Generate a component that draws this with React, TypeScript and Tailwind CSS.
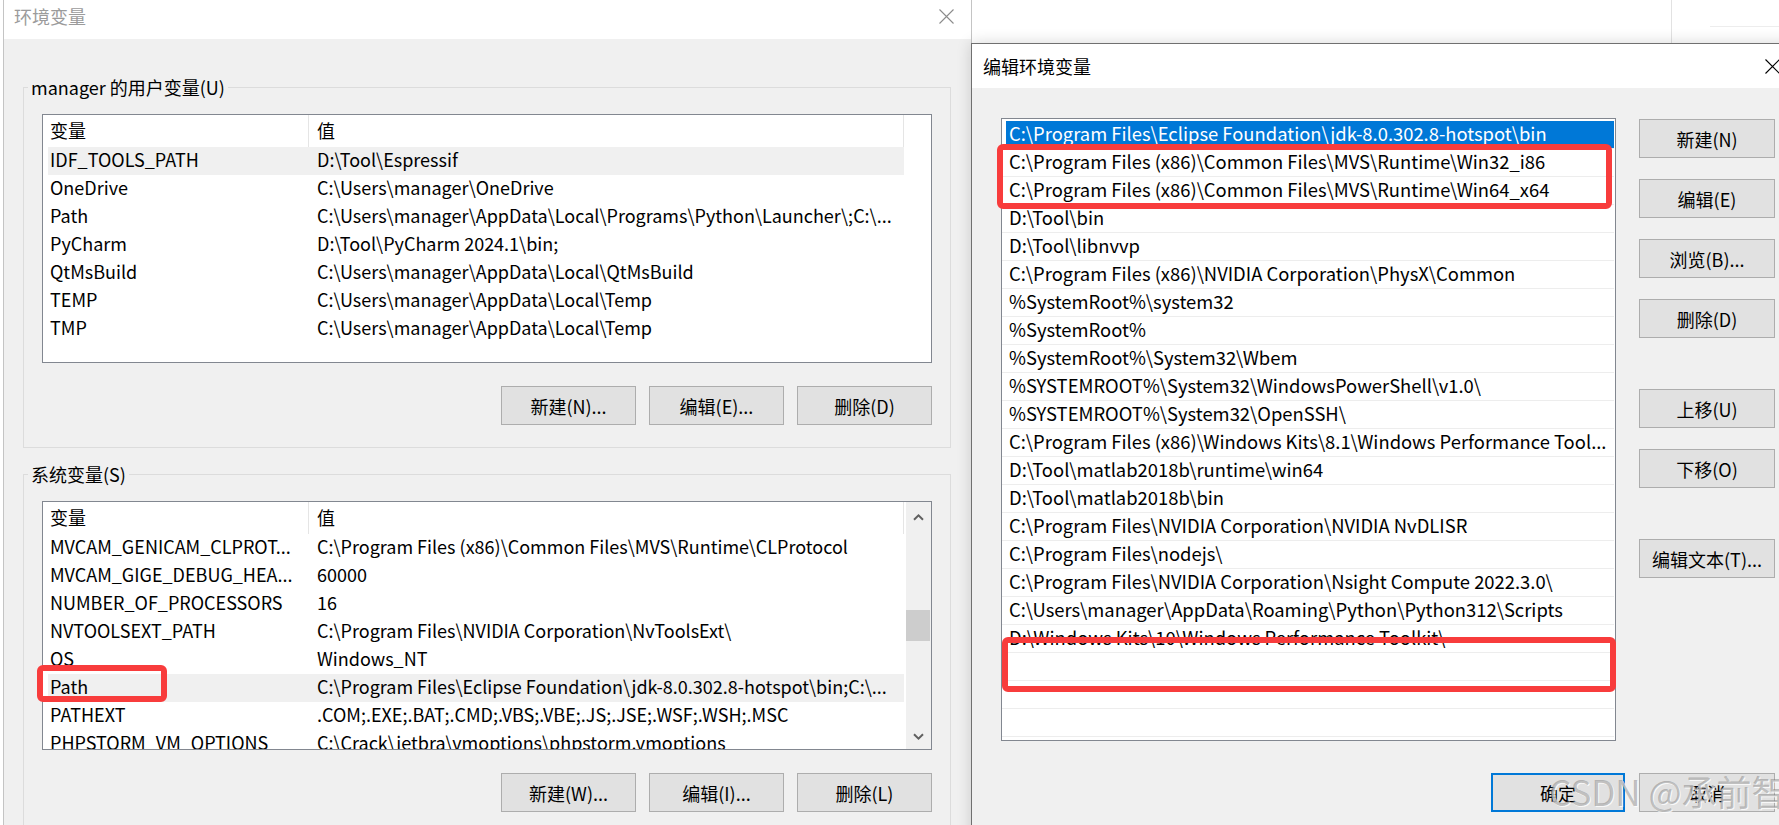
import React from "react";

// rows shown in the two list views of the 环境变量 dialog
const userVars: [string, string][] = [
  ["IDF_TOOLS_PATH", "D:\\Tool\\Espressif"],
  ["OneDrive", "C:\\Users\\manager\\OneDrive"],
  ["Path", "C:\\Users\\manager\\AppData\\Local\\Programs\\Python\\Launcher\\;C:\\..."],
  ["PyCharm", "D:\\Tool\\PyCharm 2024.1\\bin;"],
  ["QtMsBuild", "C:\\Users\\manager\\AppData\\Local\\QtMsBuild"],
  ["TEMP", "C:\\Users\\manager\\AppData\\Local\\Temp"],
  ["TMP", "C:\\Users\\manager\\AppData\\Local\\Temp"],
];

const sysVars: [string, string][] = [
  ["MVCAM_GENICAM_CLPROT...", "C:\\Program Files (x86)\\Common Files\\MVS\\Runtime\\CLProtocol"],
  ["MVCAM_GIGE_DEBUG_HEA...", "60000"],
  ["NUMBER_OF_PROCESSORS", "16"],
  ["NVTOOLSEXT_PATH", "C:\\Program Files\\NVIDIA Corporation\\NvToolsExt\\"],
  ["OS", "Windows_NT"],
  ["Path", "C:\\Program Files\\Eclipse Foundation\\jdk-8.0.302.8-hotspot\\bin;C:\\..."],
  ["PATHEXT", ".COM;.EXE;.BAT;.CMD;.VBS;.VBE;.JS;.JSE;.WSF;.WSH;.MSC"],
  ["PHPSTORM_VM_OPTIONS", "C:\\Crack\\jetbra\\vmoptions\\phpstorm.vmoptions"],
];

const pathEntries = [
  "C:\\Program Files\\Eclipse Foundation\\jdk-8.0.302.8-hotspot\\bin",
  "C:\\Program Files (x86)\\Common Files\\MVS\\Runtime\\Win32_i86",
  "C:\\Program Files (x86)\\Common Files\\MVS\\Runtime\\Win64_x64",
  "D:\\Tool\\bin",
  "D:\\Tool\\libnvvp",
  "C:\\Program Files (x86)\\NVIDIA Corporation\\PhysX\\Common",
  "%SystemRoot%\\system32",
  "%SystemRoot%",
  "%SystemRoot%\\System32\\Wbem",
  "%SYSTEMROOT%\\System32\\WindowsPowerShell\\v1.0\\",
  "%SYSTEMROOT%\\System32\\OpenSSH\\",
  "C:\\Program Files (x86)\\Windows Kits\\8.1\\Windows Performance Tool...",
  "D:\\Tool\\matlab2018b\\runtime\\win64",
  "D:\\Tool\\matlab2018b\\bin",
  "C:\\Program Files\\NVIDIA Corporation\\NVIDIA NvDLISR",
  "C:\\Program Files\\nodejs\\",
  "C:\\Program Files\\NVIDIA Corporation\\Nsight Compute 2022.3.0\\",
  "C:\\Users\\manager\\AppData\\Roaming\\Python\\Python312\\Scripts",
  "D:\\Windows Kits\\10\\Windows Performance Toolkit\\",
  "",
  "",
  "",
];

function CloseIcon({ className = "" }: { className?: string }) {
  return (
    <svg width="15" height="15" viewBox="0 0 15 15" className={`shrink-0 ${className}`}>
      <path d="M0.5 0.5L14.5 14.5M14.5 0.5L0.5 14.5" stroke="currentColor" strokeWidth="1.1" fill="none" />
    </svg>
  );
}

function Chevron({ down = false }: { down?: boolean }) {
  return (
    <svg width="11" height="7" viewBox="0 0 11 7">
      <path
        d={down ? "M1 1.2L5.5 5.6L10 1.2" : "M1 5.8L5.5 1.4L10 5.8"}
        stroke="#606060"
        strokeWidth="2"
        fill="none"
      />
    </svg>
  );
}

function Btn({
  children,
  w = "w-[135px]",
  primary = false,
}: {
  children: React.ReactNode;
  w?: string;
  primary?: boolean;
}) {
  return (
    <button
      type="button"
      className={`flex h-[39px] shrink-0 items-center justify-center bg-[#e1e1e1] leading-none ${w} ${
        primary ? "border-2 border-[#0078d7]" : "border border-[#adadad]"
      }`}
    >
      {children}
    </button>
  );
}

function RedBox({ className }: { className: string }) {
  return (
    <div
      className={`pointer-events-none absolute rounded-[6px] border-[6px] border-[#f83c3c] ${className}`}
    />
  );
}

function ScrollBar() {
  return (
    <div className="flex h-full flex-col bg-[#f0f0f0]">
      <div className="flex h-[30px] shrink-0 items-center justify-center">
        <Chevron />
      </div>
      <div className="mt-[78px] h-[31px] w-[24px] shrink-0 bg-[#cdcdcd]" />
      <div className="mt-auto flex h-[26px] shrink-0 items-center justify-center">
        <Chevron down />
      </div>
    </div>
  );
}

function VarTable({
  rows,
  selected,
  scroll = false,
}: {
  rows: [string, string][];
  selected: number;
  scroll?: boolean;
}) {
  return (
    <div className="flex h-[249px] overflow-hidden border border-[#828790] bg-white">
      <div className="flex min-w-0 flex-1 flex-col pl-[5px]">
        <div className="flex h-[32px] shrink-0 leading-[30px]">
          <div className="w-[261px] shrink-0 border-r border-[#e5e5e5] pl-[2px]">变量</div>
          <div className="flex-1 border-r border-[#e5e5e5] pl-[8px]">值</div>
        </div>
        {rows.map(([name, value], i) => (
          <div
            key={name + i}
            className={`flex h-[28px] shrink-0 leading-[25px] ${i === selected ? "bg-[#f0f0f0]" : ""}`}
          >
            <div className="w-[261px] shrink-0 overflow-hidden whitespace-nowrap pl-[2px]">{name}</div>
            <div className="min-w-0 flex-1 overflow-hidden whitespace-nowrap pl-[8px]">{value}</div>
          </div>
        ))}
      </div>
      <div className="w-[27px] shrink-0 pl-[2px]">{scroll && <ScrollBar />}</div>
    </div>
  );
}

function Group({
  label,
  className = "",
  children,
}: {
  label: string;
  className?: string;
  children: React.ReactNode;
}) {
  return (
    <fieldset className={`border border-[#dcdcdc] p-0 ${className}`}>
      <legend className="ml-[4px] px-[3px] leading-[24px]">{label}</legend>
      <div className="px-[18px] pb-[22px] pt-[15px]">{children}</div>
    </fieldset>
  );
}

function EnvDialog() {
  return (
    <div className="absolute left-[3px] top-0 flex h-[825px] w-[969px] flex-col border-x border-[#c4c4c4] bg-[#f0f0f0]">
      <div className="flex h-[39px] shrink-0 items-start justify-between bg-white pl-[10px] pr-[17px] pt-[4px]">
        <span className="leading-[24px] text-[#9b9b9b]">环境变量</span>
        <CloseIcon className="mt-[5px] text-[#8c8c8c]" />
      </div>

      <div className="flex flex-col pl-[19px] pr-[20px]">
        <Group label="manager 的用户变量(U)" className="mt-[36px]">
          <VarTable rows={userVars} selected={0} />
          <div className="mt-[23px] flex justify-end gap-[13px]">
            <Btn>新建(N)...</Btn>
            <Btn>编辑(E)...</Btn>
            <Btn>删除(D)</Btn>
          </div>
        </Group>

        <Group label="系统变量(S)" className="mt-[14px]">
          <div className="relative">
            <VarTable rows={sysVars} selected={5} scroll />
            <RedBox className="left-[-5px] top-[164px] h-[37px] w-[130px]" />
          </div>
          <div className="mt-[23px] flex justify-end gap-[13px]">
            <Btn>新建(W)...</Btn>
            <Btn>编辑(I)...</Btn>
            <Btn>删除(L)</Btn>
          </div>
        </Group>
      </div>
    </div>
  );
}

function EditDialog() {
  return (
    <div className="absolute left-[971px] top-[43px] flex h-[800px] w-[840px] flex-col border border-[#707070] bg-[#f0f0f0] shadow-[0_0_14px_rgba(0,0,0,0.16)]">
      <div className="flex h-[44px] shrink-0 items-center justify-between bg-white pl-[11px] pr-[30px]">
        <span className="leading-[24px]">编辑环境变量</span>
        <CloseIcon className="text-black" />
      </div>

      <div className="flex flex-col pl-[29px] pt-[30px]">
        <div className="flex gap-[23px]">
          <div className="relative h-[623px] w-[615px] shrink-0">
            <div className="h-full overflow-hidden border border-[#828790] bg-white pr-[1px] pt-[2px] text-[18.4px]">
              {pathEntries.map((p, i) => (
                <div key={i} className="h-[28px] border-b border-[#ededed] leading-[25px]">
                  {i === 0 ? (
                    <div className="ml-[4px] h-full whitespace-nowrap bg-[#0078d7] pl-[3px] text-white">{p}</div>
                  ) : (
                    <div className="overflow-hidden whitespace-nowrap pl-[7px]">{p}</div>
                  )}
                </div>
              ))}
            </div>
            <RedBox className="left-[-4px] top-[26px] h-[65px] w-[615px]" />
            <RedBox className="left-[1px] top-[519px] h-[55px] w-[614px]" />
          </div>

          <div className="flex w-[136px] shrink-0 flex-col pt-[1px]">
            <Btn w="w-[136px]">新建(N)</Btn>
            <div className="mt-[21px]">
              <Btn w="w-[136px]">编辑(E)</Btn>
            </div>
            <div className="mt-[21px]">
              <Btn w="w-[136px]">浏览(B)...</Btn>
            </div>
            <div className="mt-[21px]">
              <Btn w="w-[136px]">删除(D)</Btn>
            </div>
            <div className="mt-[51px]">
              <Btn w="w-[136px]">上移(U)</Btn>
            </div>
            <div className="mt-[21px]">
              <Btn w="w-[136px]">下移(O)</Btn>
            </div>
            <div className="mt-[51px]">
              <Btn w="w-[136px]">编辑文本(T)...</Btn>
            </div>
          </div>
        </div>

        <div className="mt-[32px] flex w-[774px] justify-end gap-[14px]">
          <Btn w="w-[134px]" primary>
            确定
          </Btn>
          <Btn w="w-[136px]">取消</Btn>
        </div>
      </div>
    </div>
  );
}

export default function App() {
  return (
    <div className="relative h-[825px] w-[1779px] overflow-hidden bg-white font-['Noto_Sans_CJK_SC',sans-serif] text-[18px] text-black">
      {/* bits of the window behind */}
      <div className="absolute left-[1671px] top-0 h-[43px] w-px bg-[#e2e2e2]" />
      <div className="absolute left-[1710px] top-[26px] h-px w-[69px] bg-[#ededed]" />

      <EnvDialog />
      <EditDialog />

      <div className="pointer-events-none absolute left-[1549px] top-[771px] whitespace-nowrap text-[35px] leading-[40px] text-[rgba(120,120,120,0.45)] [text-shadow:1px_1px_0_rgba(255,255,255,0.8)]">
        CSDN @承前智
      </div>
    </div>
  );
}
